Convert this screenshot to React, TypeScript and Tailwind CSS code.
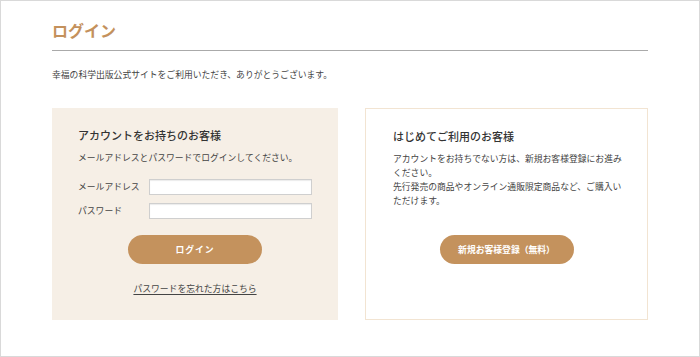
import React from 'react';

const font = { fontFamily: '"Noto Sans CJK JP", "Noto Sans", sans-serif' };

function LoginBox() {
  return (
    <div className="w-[286px] bg-[#f6efe6] px-[26px] pt-[19px]">
      <h2 className="text-[11px] leading-[16px] font-medium text-[#333]">アカウントをお持ちのお客様</h2>
      <p className="mt-[8px] text-[8.8px] leading-[13px] text-[#444]">
        メールアドレスとパスワードでログインしてください。
      </p>
      <div className="mt-[15px] flex flex-col gap-[8px]">
        <div className="flex items-center">
          <label className="w-[71px] text-[8.8px] leading-[16px] text-[#444]">メールアドレス</label>
          <input type="text" className="h-[16px] w-[163px] border border-[#cfcfcf] bg-white shadow-[inset_0_1px_1px_rgba(0,0,0,0.08)] outline-none" />
        </div>
        <div className="flex items-center">
          <label className="w-[71px] text-[8.8px] leading-[16px] text-[#444]">パスワード</label>
          <input type="password" className="h-[16px] w-[163px] border border-[#cfcfcf] bg-white shadow-[inset_0_1px_1px_rgba(0,0,0,0.08)] outline-none" />
        </div>
      </div>
      <div className="mt-[16px] flex justify-center">
        <button className="h-[29px] w-[134px] rounded-full bg-[#c4925d] text-[8.8px] font-bold tracking-[1px] text-white">
          ログイン
        </button>
      </div>
      <div className="mt-[9px] text-center">
        <a href="#" className="text-[8.8px] leading-[13px] text-[#444] underline underline-offset-2">
          パスワードを忘れた方はこちら
        </a>
      </div>
    </div>
  );
}

function SignupBox() {
  return (
    <div className="w-[283px] border border-[#f2e4d2] bg-white pl-[27px] pr-[24px] pt-[19px]">
      <h2 className="text-[11px] leading-[16px] font-medium text-[#333]">はじめてご利用のお客様</h2>
      <p className="mt-[8px] text-[8.8px] leading-[14px] text-[#444]">
        アカウントをお持ちでない方は、新規お客様登録にお進みください。
        <br />
        先行発売の商品やオンライン通販限定商品など、ご購入いただけます。
      </p>
      <div className="mt-[27px] flex justify-center pr-[3px]">
        <button className="h-[29px] w-[134px] rounded-full bg-[#c4925d] text-[8.8px] font-bold text-white">
          新規お客様登録（無料）
        </button>
      </div>
    </div>
  );
}

export default function App() {
  return (
    <div style={font} className="h-[357px] w-[700px] border border-[#d9d9d9] bg-white">
      <div className="px-[51px] pt-[17px]">
        <h1 className="border-b border-[#aaaaaa] pb-[8px] text-[16px] leading-[24px] font-bold text-[#c4915c]">
          ログイン
        </h1>
        <p className="mt-[17px] text-[8.8px] leading-[13px] text-[#444]">
          幸福の科学出版公式サイトをご利用いただき、ありがとうございます。
        </p>
        <div className="mt-[27px] flex h-[212px] gap-[27px]">
          <LoginBox />
          <SignupBox />
        </div>
      </div>
    </div>
  );
}
